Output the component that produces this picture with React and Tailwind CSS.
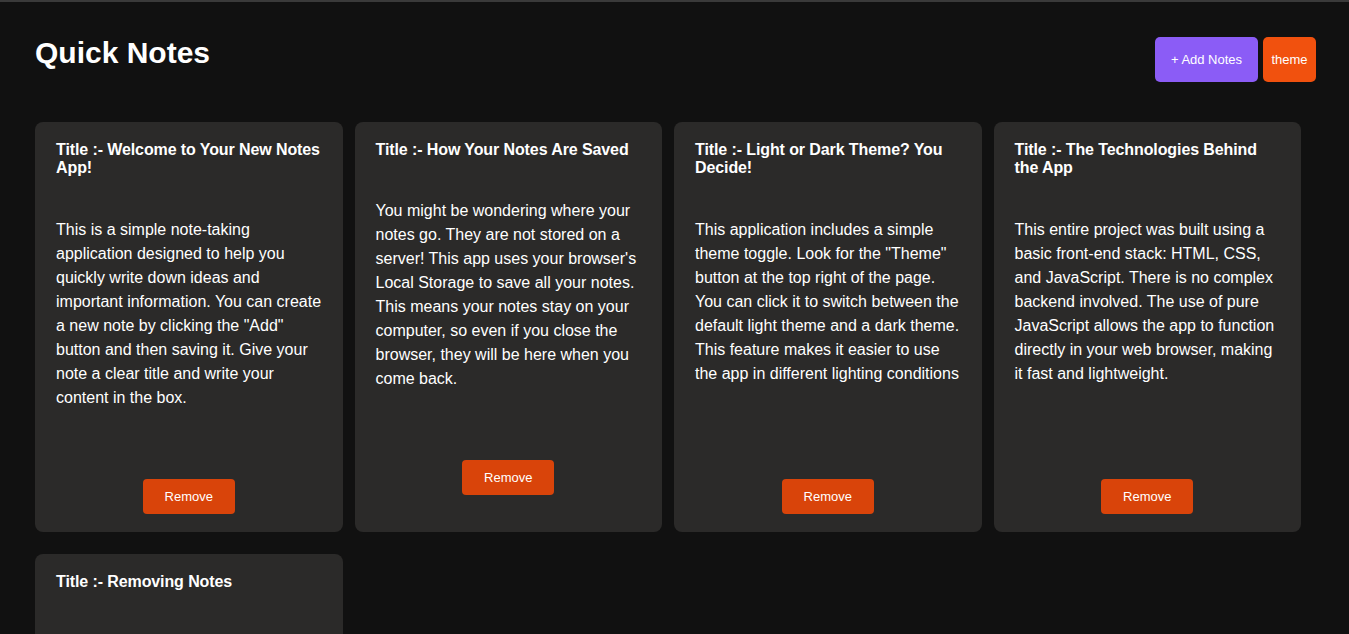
import React from 'react';

const notes = [
  {
    id: 1,
    title: 'Welcome to Your New Notes App!',
    body: 'This is a simple note-taking application designed to help you quickly write down ideas and important information. You can create a new note by clicking the "Add" button and then saving it. Give your note a clear title and write your content in the box.',
  },
  {
    id: 2,
    title: 'How Your Notes Are Saved',
    body: "You might be wondering where your notes go. They are not stored on a server! This app uses your browser's Local Storage to save all your notes. This means your notes stay on your computer, so even if you close the browser, they will be here when you come back.",
  },
  {
    id: 3,
    title: 'Light or Dark Theme? You Decide!',
    body: 'This application includes a simple theme toggle. Look for the "Theme" button at the top right of the page. You can click it to switch between the default light theme and a dark theme. This feature makes it easier to use the app in different lighting conditions',
  },
  {
    id: 4,
    title: 'The Technologies Behind the App',
    body: 'This entire project was built using a basic front-end stack: HTML, CSS, and JavaScript. There is no complex backend involved. The use of pure JavaScript allows the app to function directly in your web browser, making it fast and lightweight.',
  },
  {
    id: 5,
    title: 'Removing Notes',
    body: 'If a note is no longer needed, simply click the "Remove" button at the bottom of the card and it will be deleted from your Local Storage.',
  },
];

function NoteCard({ note }) {
  return (
    <div className="flex flex-col bg-[#2b2a29] rounded-lg pt-[19px] pl-[21px] pr-[17px] pb-[18px]">
      <h3 className="text-base font-bold leading-[18.4px] tracking-[-0.1px] text-white">Title :- {note.title}</h3>
      <p className="mt-10 h-[240px] pr-[4px] text-base leading-6 text-white">{note.body}</p>
      <div className="mt-[21px] mr-[4px] flex justify-center">
        <button className="w-[92px] h-[35px] rounded bg-[#d9440a] text-[13px] text-white">Remove</button>
      </div>
    </div>
  );
}

export default function App() {
  return (
    <div className="min-h-screen bg-[#111111] border-t-2 border-[#3a3a3a] pl-[35px] pr-[33px] pb-10 font-['Liberation_Sans',Arial,sans-serif]">
      {/* Header */}
      <div className="flex justify-between items-start pt-[33px]">
        <h1 className="text-[30px] leading-9 font-bold text-white">Quick Notes</h1>
        <div className="flex gap-[5px] mt-[2px]">
          <button className="w-[103px] h-[45px] rounded-[5px] bg-[#8b5cf6] text-[13px] text-white">+ Add Notes</button>
          <button className="w-[53px] h-[45px] rounded-[5px] bg-[#f1510e] text-[13px] text-white">theme</button>
        </div>
      </div>

      {/* Notes grid */}
      <div className="mt-[40px] grid grid-cols-[repeat(4,307.5px)] gap-x-[12px] gap-y-[22px]">
        {notes.map(n => (
          <NoteCard key={n.id} note={n} />
        ))}
      </div>
    </div>
  );
}
